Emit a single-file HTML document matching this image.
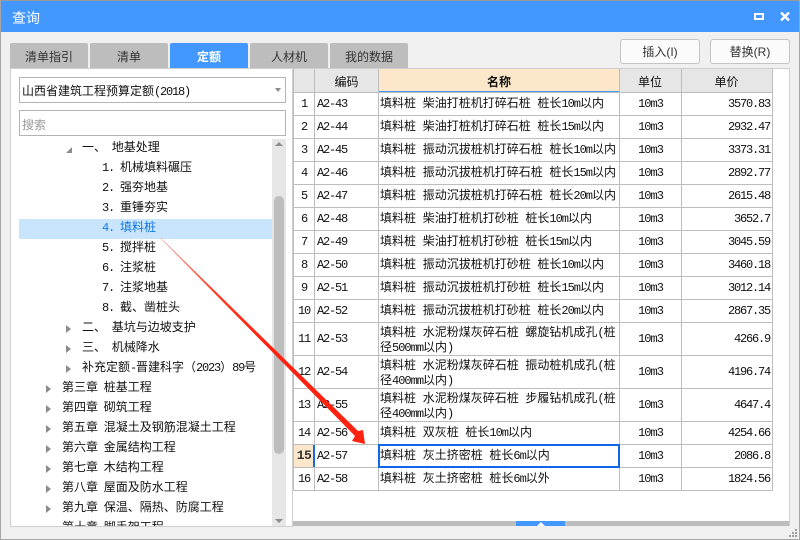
<!DOCTYPE html>
<html lang="zh"><head><meta charset="utf-8"><title>查询</title>
<style>
html,body{margin:0;padding:0;width:800px;height:540px;overflow:hidden}
body{position:relative;background:#f0f0f0;font-family:"WenQuanYi Zen Hei","Noto Sans CJK SC",sans-serif;font-size:12px;color:#111}
div{position:absolute;box-sizing:border-box;white-space:nowrap}
i,.c{font-family:"Liberation Mono","WenQuanYi Zen Hei",monospace;letter-spacing:-1.2px;font-style:normal;word-spacing:0}
.name i{letter-spacing:-1px}
.tab{top:43px;width:78px;height:25px;background:#bdbdbd;border-radius:2px 2px 0 0;text-align:center;line-height:27px;font-size:12px;color:#333}
.t{height:20px;line-height:20px;font-size:12px;color:#111;word-spacing:3px}
.ar{width:0;height:0;border-left:5px solid #8c8c8c;border-top:4px solid transparent;border-bottom:4px solid transparent;margin-top:-1px}
.hl{background:#bdbdbd;height:1px;left:293px;width:480px}
.vl{background:#bdbdbd;width:1px;top:69px;height:422px}
.c{font-size:12px;line-height:14px}
.n{left:294px;width:20px;text-align:center}
.code{left:317px}
.name{left:380px;width:238px;font-size:12px;line-height:14px;word-spacing:4px}
.u{left:620px;width:61px;text-align:center;letter-spacing:-1px}
.p{left:682px;width:88px;text-align:right}
.btn{top:39px;width:80px;height:25px;border:1px solid #c4c4c4;border-radius:3px;background:#fbfbfb;text-align:center;line-height:25px;font-size:12px;color:#333;font-family:"Liberation Sans","WenQuanYi Zen Hei",sans-serif}
.h{top:69px;height:23px;line-height:25px;text-align:center;font-size:12px}
</style></head><body>
<div style="left:0;top:0;width:800px;height:540px;border:1px solid #a6a6a6;border-top:1px solid #9a9a9a"></div>
<div style="left:1px;top:1px;width:798px;height:31px;background:#4298ff"></div>
<div style="left:12px;top:8px;color:#fff;font-size:14px;line-height:20px;letter-spacing:0">查询</div>
<div style="left:754px;top:13px;width:10px;height:7px;border:2px solid #fff"></div>
<svg style="position:absolute;left:780px;top:12px" width="10" height="9"><path d="M1 0.5L9 8.5M9 0.5L1 8.5" stroke="#fff" stroke-width="2.4"/></svg>

<div class="tab" style="left:10px">清单指引</div>
<div class="tab" style="left:90px">清单</div>
<div class="tab" style="left:170px;background:#4298ff;color:#fff;font-weight:bold">定额</div>
<div class="tab" style="left:250px">人材机</div>
<div class="tab" style="left:330px">我的数据</div>
<div class="btn" style="left:620px">插入(I)</div>
<div class="btn" style="left:710px">替换(R)</div>

<!-- left panel -->
<div style="left:10px;top:68px;width:283px;height:459px;background:#fff;border:1px solid #cfcfcf"></div>
<div style="left:19px;top:77px;width:267px;height:26px;border:1px solid #b4b4b4;background:#fff;line-height:26px;padding-left:2px;font-size:12px">山西省建筑工程预算定额<i>(2018)</i></div>
<div style="left:275px;top:88px;width:0;height:0;border-top:4px solid #8c8c8c;border-left:3px solid transparent;border-right:3px solid transparent"></div>
<div style="left:19px;top:110px;width:267px;height:26px;border:1px solid #b4b4b4;background:#fff;line-height:27px;padding-left:2px;color:#9a9a9a">搜索</div>

<div style="left:19px;top:219px;width:253px;height:20px;background:#c8e5fd"></div>
<div class="t" style="left:82px;top:137px">一、 地基处理</div>
<div style="left:66px;top:147px;width:6px;height:6px;background:#8c8c8c;clip-path:polygon(100% 0,100% 100%,0 100%)"></div>
<div class="t" style="left:102px;top:157px"><i>1.&nbsp;</i>机械填料碾压</div>
<div class="t" style="left:102px;top:177px"><i>2.&nbsp;</i>强夯地基</div>
<div class="t" style="left:102px;top:197px"><i>3.&nbsp;</i>重锤夯实</div>
<div class="t" style="left:102px;top:217px;color:#1577e0"><i>4.&nbsp;</i>填料桩</div>
<div class="t" style="left:102px;top:237px"><i>5.&nbsp;</i>搅拌桩</div>
<div class="t" style="left:102px;top:257px"><i>6.&nbsp;</i>注浆桩</div>
<div class="t" style="left:102px;top:277px"><i>7.&nbsp;</i>注浆地基</div>
<div class="t" style="left:102px;top:297px"><i>8.&nbsp;</i>截、凿桩头</div>
<div class="ar" style="left:66px;top:326px"></div><div class="t" style="left:82px;top:317px">二、 基坑与边坡支护</div>
<div class="ar" style="left:66px;top:346px"></div><div class="t" style="left:82px;top:337px">三、 机械降水</div>
<div class="ar" style="left:66px;top:366px"></div><div class="t" style="left:82px;top:357px">补充定额<i>-</i>晋建科字（<i>2023</i>）<i>89</i>号</div>
<div class="ar" style="left:46px;top:386px"></div><div class="t" style="left:62px;top:377px">第三章 桩基工程</div>
<div class="ar" style="left:46px;top:406px"></div><div class="t" style="left:62px;top:397px">第四章 砌筑工程</div>
<div class="ar" style="left:46px;top:426px"></div><div class="t" style="left:62px;top:417px">第五章 混凝土及钢筋混凝土工程</div>
<div class="ar" style="left:46px;top:446px"></div><div class="t" style="left:62px;top:437px">第六章 金属结构工程</div>
<div class="ar" style="left:46px;top:466px"></div><div class="t" style="left:62px;top:457px">第七章 木结构工程</div>
<div class="ar" style="left:46px;top:486px"></div><div class="t" style="left:62px;top:477px">第八章 屋面及防水工程</div>
<div class="ar" style="left:46px;top:506px"></div><div class="t" style="left:62px;top:497px">第九章 保温、隔热、防腐工程</div>
<div style="left:46px;top:517px;width:226px;height:9px;overflow:hidden"><div class="t" style="left:16px;top:0">第十章 脚手架工程</div></div>

<div style="left:272px;top:139px;width:14px;height:387px;background:#e6e6e6"></div>
<div style="left:274px;top:196px;width:10px;height:258px;background:#bdbdbd;border-radius:5px"></div>
<div style="left:275px;top:142px;width:0;height:0;border-bottom:4px solid #8c8c8c;border-left:4px solid transparent;border-right:4px solid transparent"></div>
<div style="left:275px;top:519px;width:0;height:0;border-top:4px solid #8c8c8c;border-left:4px solid transparent;border-right:4px solid transparent"></div>
<div style="left:0;top:539px;width:800px;height:1px;background:#a6a6a6"></div>

<!-- right panel -->
<div style="left:292px;top:68px;width:498px;height:458px;background:#fff;border:1px solid #cfcfcf"></div>
<div style="left:293px;top:69px;width:480px;height:23px;background:#e6e6e6"></div>
<div style="left:379px;top:69px;width:240px;height:23px;background:#fde7cb;border-bottom:1px solid #4298ff"></div>
<div class="h" style="left:314px;width:65px">编码</div>
<div class="h" style="left:379px;width:240px;font-weight:bold">名称</div>
<div class="h" style="left:619px;width:62px">单位</div>
<div class="h" style="left:681px;width:91px">单价</div>

<div class="hl" style="top:92px"></div><div class="hl" style="top:115px"></div><div class="hl" style="top:138px"></div><div class="hl" style="top:161px"></div><div class="hl" style="top:184px"></div><div class="hl" style="top:207px"></div><div class="hl" style="top:230px"></div><div class="hl" style="top:253px"></div><div class="hl" style="top:276px"></div><div class="hl" style="top:299px"></div><div class="hl" style="top:322px"></div><div class="hl" style="top:355px"></div><div class="hl" style="top:388px"></div><div class="hl" style="top:421px"></div><div class="hl" style="top:444px"></div><div class="hl" style="top:467px"></div><div class="hl" style="top:490px"></div>
<div class="vl" style="left:293px"></div><div class="vl" style="left:314px"></div><div class="vl" style="left:378px"></div><div class="vl" style="left:619px"></div><div class="vl" style="left:681px"></div><div class="vl" style="left:772px"></div>

<div class="c n" style="top:97px">1</div><div class="c code" style="top:97px">A2-43</div><div class="name" style="top:96px">填料桩 柴油打桩机打碎石桩 桩长<i>10m</i>以内</div><div class="c u" style="top:97px">10m3</div><div class="c p" style="top:97px">3570.83</div>
<div class="c n" style="top:120px">2</div><div class="c code" style="top:120px">A2-44</div><div class="name" style="top:119px">填料桩 柴油打桩机打碎石桩 桩长<i>15m</i>以内</div><div class="c u" style="top:120px">10m3</div><div class="c p" style="top:120px">2932.47</div>
<div class="c n" style="top:143px">3</div><div class="c code" style="top:143px">A2-45</div><div class="name" style="top:142px">填料桩 振动沉拔桩机打碎石桩 桩长<i>10m</i>以内</div><div class="c u" style="top:143px">10m3</div><div class="c p" style="top:143px">3373.31</div>
<div class="c n" style="top:166px">4</div><div class="c code" style="top:166px">A2-46</div><div class="name" style="top:165px">填料桩 振动沉拔桩机打碎石桩 桩长<i>15m</i>以内</div><div class="c u" style="top:166px">10m3</div><div class="c p" style="top:166px">2892.77</div>
<div class="c n" style="top:189px">5</div><div class="c code" style="top:189px">A2-47</div><div class="name" style="top:188px">填料桩 振动沉拔桩机打碎石桩 桩长<i>20m</i>以内</div><div class="c u" style="top:189px">10m3</div><div class="c p" style="top:189px">2615.48</div>
<div class="c n" style="top:212px">6</div><div class="c code" style="top:212px">A2-48</div><div class="name" style="top:211px">填料桩 柴油打桩机打砂桩 桩长<i>10m</i>以内</div><div class="c u" style="top:212px">10m3</div><div class="c p" style="top:212px">3652.7</div>
<div class="c n" style="top:235px">7</div><div class="c code" style="top:235px">A2-49</div><div class="name" style="top:234px">填料桩 柴油打桩机打砂桩 桩长<i>15m</i>以内</div><div class="c u" style="top:235px">10m3</div><div class="c p" style="top:235px">3045.59</div>
<div class="c n" style="top:258px">8</div><div class="c code" style="top:258px">A2-50</div><div class="name" style="top:257px">填料桩 振动沉拔桩机打砂桩 桩长<i>10m</i>以内</div><div class="c u" style="top:258px">10m3</div><div class="c p" style="top:258px">3460.18</div>
<div class="c n" style="top:281px">9</div><div class="c code" style="top:281px">A2-51</div><div class="name" style="top:280px">填料桩 振动沉拔桩机打砂桩 桩长<i>15m</i>以内</div><div class="c u" style="top:281px">10m3</div><div class="c p" style="top:281px">3012.14</div>
<div class="c n" style="top:304px">10</div><div class="c code" style="top:304px">A2-52</div><div class="name" style="top:303px">填料桩 振动沉拔桩机打砂桩 桩长<i>20m</i>以内</div><div class="c u" style="top:304px">10m3</div><div class="c p" style="top:304px">2867.35</div>
<div class="c n" style="top:332px">11</div><div class="c code" style="top:332px">A2-53</div><div class="name" style="top:325px">填料桩 水泥粉煤灰碎石桩 螺旋钻机成孔<i>(</i>桩<br>径<i>500mm</i>以内<i>)</i></div><div class="c u" style="top:332px">10m3</div><div class="c p" style="top:332px">4266.9</div>
<div class="c n" style="top:365px">12</div><div class="c code" style="top:365px">A2-54</div><div class="name" style="top:358px">填料桩 水泥粉煤灰碎石桩 振动桩机成孔<i>(</i>桩<br>径<i>400mm</i>以内<i>)</i></div><div class="c u" style="top:365px">10m3</div><div class="c p" style="top:365px">4196.74</div>
<div class="c n" style="top:398px">13</div><div class="c code" style="top:398px">A2-55</div><div class="name" style="top:391px">填料桩 水泥粉煤灰碎石桩 步履钻机成孔<i>(</i>桩<br>径<i>400mm</i>以内<i>)</i></div><div class="c u" style="top:398px">10m3</div><div class="c p" style="top:398px">4647.4</div>
<div class="c n" style="top:426px">14</div><div class="c code" style="top:426px">A2-56</div><div class="name" style="top:425px">填料桩 双灰桩 桩长<i>10m</i>以内</div><div class="c u" style="top:426px">10m3</div><div class="c p" style="top:426px">4254.66</div>
<div style="left:294px;top:445px;width:20px;height:22px;background:#fde7cb"></div>
<div style="left:313px;top:445px;width:2px;height:22px;background:#1569e8"></div>
<div class="c n" style="top:449px;font-weight:bold;font-size:13px;color:#333;letter-spacing:-.5px">15</div><div class="c code" style="top:449px">A2-57</div>
<div style="left:378px;top:444px;width:242px;height:24px;border:2px solid #0f66e8"></div>
<div class="name" style="top:448px">填料桩 灰土挤密桩 桩长<i>6m</i>以内</div><div class="c u" style="top:449px">10m3</div><div class="c p" style="top:449px">2086.8</div>
<div class="c n" style="top:472px">16</div><div class="c code" style="top:472px">A2-58</div><div class="name" style="top:471px">填料桩 灰土挤密桩 桩长<i>6m</i>以外</div><div class="c u" style="top:472px">10m3</div><div class="c p" style="top:472px">1824.56</div>

<div style="left:293px;top:521px;width:496px;height:5px;background:#bdbdbd"></div>
<div style="left:516px;top:521px;width:49px;height:5px;background:#4298ff"></div>
<div style="left:537px;top:522px;width:0;height:0;border-bottom:4px solid #fff;border-left:4px solid transparent;border-right:4px solid transparent"></div>

<svg style="position:absolute;left:0;top:0" width="800" height="540">
<defs><linearGradient id="g" gradientUnits="userSpaceOnUse" x1="160" y1="238" x2="270" y2="348"><stop offset="0" stop-color="#f3b0a8"/><stop offset=".5" stop-color="#ff3a20"/><stop offset="1" stop-color="#ff2210"/></linearGradient></defs>
<path d="M160 238L160.6 237.6L358 431L363 430L365 444L352 441L355 436Z" fill="url(#g)"/>
<g fill="#a0a0a0"><rect x="795" y="529" width="2" height="2"/><rect x="792" y="532" width="2" height="2"/><rect x="795" y="532" width="2" height="2"/><rect x="789" y="535" width="2" height="2"/><rect x="792" y="535" width="2" height="2"/><rect x="795" y="535" width="2" height="2"/></g>
</svg>
</body></html>
